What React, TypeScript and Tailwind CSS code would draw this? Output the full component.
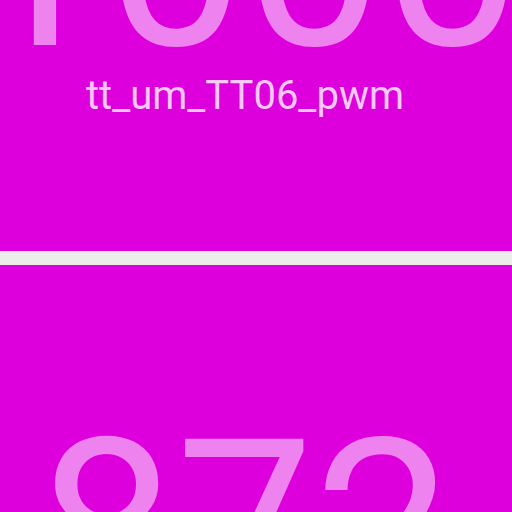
export default function App() {
  return (
    <div className="flex h-[512px] w-[512px] flex-col gap-[14px] overflow-hidden bg-[#ececec] font-['Roboto',sans-serif]">
      <div className="flex h-[251px] shrink-0 flex-col items-center overflow-hidden bg-[#dd00dd] pr-[22px]">
        <div className="mt-[-162px] text-[246px] leading-[246px] text-[#ee82ee]">1000</div>
        <div className="mt-[-8px] text-[40px] leading-[40px] text-[#f8c8f8]">tt_um_TT06_pwm</div>
      </div>
      <div className="flex flex-1 flex-col items-center overflow-hidden bg-[#dd00dd] pr-[22px]">
        <div className="mt-[142px] text-[246px] leading-[246px] text-[#ee82ee]">872</div>
      </div>
    </div>
  )
}
